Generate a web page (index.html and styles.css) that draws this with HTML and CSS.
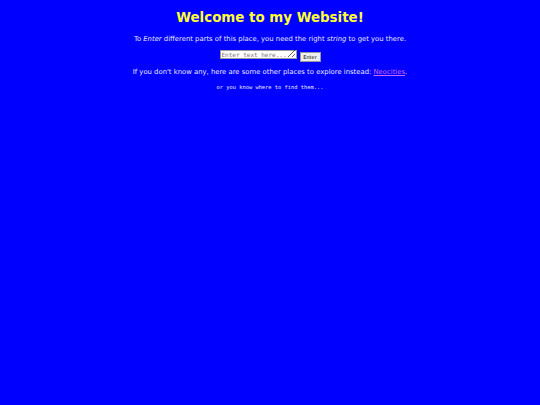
FILE: index.html
```html
<!DOCTYPE html>
<html>
<head>
<meta charset="utf-8">
<link rel="stylesheet" href="styles.css">
</head>
<body>
<h1 class="title">Welcome to my Website!</h1>
<p class="intro">To <em>Enter</em> different parts of this place, you need the right <em>string</em> to get you there.</p>
<form class="entry">
<textarea class="box" placeholder="Enter text here..."></textarea>
<button class="btn" type="button">Enter</button>
</form>
<p class="intro second">If you don't know any, here are some other places to explore instead: <a class="link" href="#">Neocities</a>.</p>
<p class="mono">or you know where to find them...</p>
</body>
</html>
```
FILE: styles.css
```css
html, body { margin: 0; padding: 0; }
body {
  background: #0000ff;
  color: #e8e8ff;
  font-family: "DejaVu Sans", Verdana, sans-serif;
  text-align: center;
  width: 540px;
  height: 405px;
  overflow: hidden;
}
.title {
  color: #ffff33;
  font-size: 13.4px;
  font-weight: bold;
  margin: 9px 0 0 0;
  line-height: 18px;
}
.intro {
  font-size: 6.85px;
  margin: 8px 0 0 0;
  line-height: 9px;
}
.second { margin-top: 6px; }
.entry {
  margin: 6px 0 0 0;
  display: flex;
  justify-content: center;
  align-items: flex-start;
  gap: 3px;
}
.box {
  width: 77px;
  height: 9px;
  box-sizing: border-box;
  font-family: "DejaVu Sans Mono", monospace;
  font-size: 6px;
  padding: 0 1px;
  border: 1px solid #999;
  background: #fff;
  resize: both;
  overflow: hidden;
  margin: 0;
  line-height: 7px;
}
.box::placeholder { color: #777; }
.btn {
  font-size: 5px;
  font-family: "DejaVu Sans", sans-serif;
  padding: 0;
  width: 21px;
  height: 10px;
  box-sizing: border-box;
  margin: 2px 0 0 0;
  border: 1px solid #999;
  background: #efefef;
  line-height: 8px;
  color: #000;
}
.link { color: #cc66ff; }
.mono {
  font-family: "DejaVu Sans Mono", monospace;
  font-size: 5.4px;
  margin: 7px 0 0 0;
  line-height: 7px;
}
```
